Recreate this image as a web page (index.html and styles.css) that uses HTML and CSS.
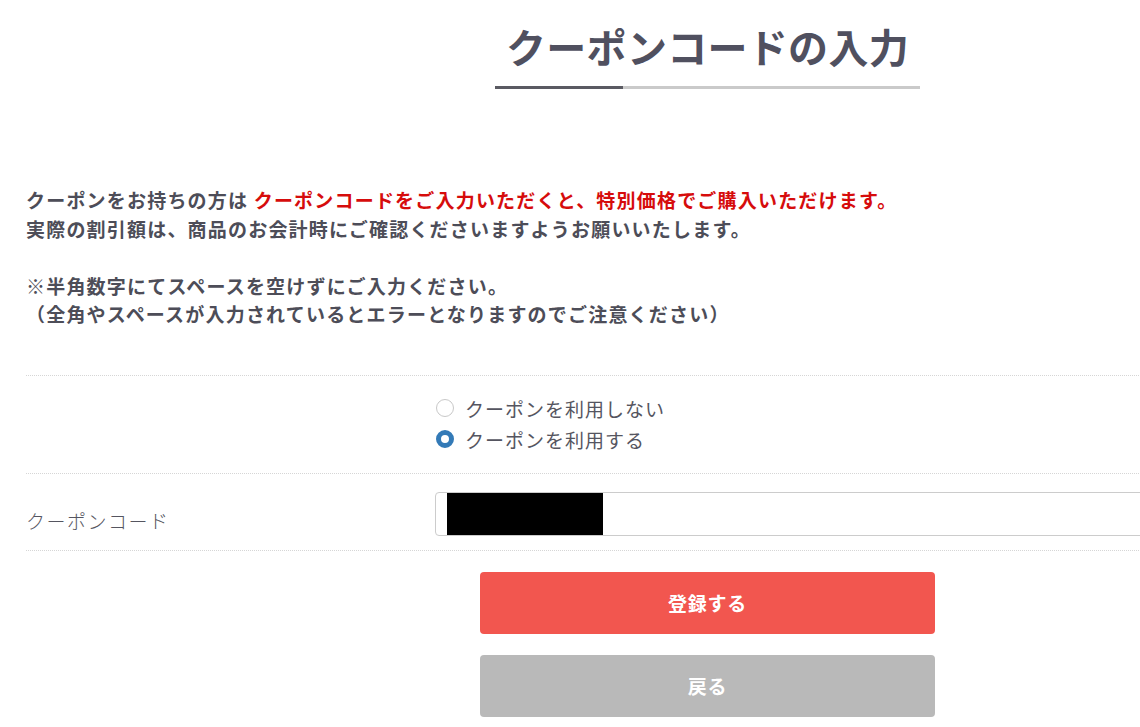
FILE: index.html
```html
<!DOCTYPE html>
<html lang="ja">
<head>
<meta charset="utf-8">
<title>クーポンコードの入力</title>
<link rel="stylesheet" href="styles.css">
</head>
<body>
<div class="page">
  <header class="title-wrap">
    <h1 class="title">クーポンコードの入力</h1>
    <div class="title-bar"></div>
  </header>

  <p class="lead">
    クーポンをお持ちの方は <span class="red">クーポンコードをご入力いただくと、特別価格でご購入いただけます。</span><br>
    実際の割引額は、商品のお会計時にご確認くださいますようお願いいたします。<br>
    <br>
    ※半角数字にてスペースを空けずにご入力ください。<br>
    （全角やスペースが入力されているとエラーとなりますのでご注意ください）
  </p>

  <div class="form">
    <div class="row row-radio">
      <div class="label"></div>
      <div class="field radios">
        <label class="radio"><input type="radio" name="use" class="radio-input"><span>クーポンを利用しない</span></label>
        <label class="radio"><input type="radio" name="use" class="radio-input" checked><span>クーポンを利用する</span></label>
      </div>
    </div>
    <div class="row row-code">
      <div class="label code-label">クーポンコード</div>
      <div class="field">
        <div class="input-box"><span class="mask"></span></div>
      </div>
    </div>
  </div>

  <div class="buttons">
    <button class="btn btn-primary" type="button">登録する</button>
    <button class="btn btn-back" type="button">戻る</button>
  </div>
</div>
</body>
</html>
```
FILE: styles.css
```css
html, body {
  margin: 0;
  padding: 0;
  overflow: hidden;
  background: #ffffff;
}
body {
  font-family: "Noto Sans CJK JP", "Noto Sans", sans-serif;
  color: #4d4d58;
}
.page {
  width: 1363px;
  margin-left: 26px;
}
.title-wrap {
  display: flex;
  flex-direction: column;
  align-items: center;
  padding-top: 22px;
}
.title {
  margin: 0;
  font-size: 40px;
  line-height: 48px;
  font-weight: 700;
  color: #50505f;
  letter-spacing: 0.3px;
}
.title-bar {
  margin-top: 16px;
  width: 425px;
  height: 3px;
  background: linear-gradient(to right, #5a5a62 0, #5a5a62 30%, #cacaca 30%, #cacaca 100%);
}
.lead {
  margin: 97px 0 0;
  font-size: 19px;
  line-height: 28.5px;
  font-weight: 700;
  letter-spacing: 1.2px;
  color: #4d4d58;
}
.red {
  color: #d60c0c;
}
.form {
  margin-top: 46px;
  border-top: 1px dotted #d6d6d6;
}
.row {
  display: grid;
  grid-template-columns: 409px 1fr;
  border-bottom: 1px dotted #d6d6d6;
}
.row-radio {
  padding: 17px 0 18px;
}
.row-code {
  padding: 18px 0 14px;
  align-items: center;
}
.label {
  font-size: 19px;
  color: #555560;
  letter-spacing: 1.5px;
}
.code-label {
  padding-top: 14px;
  font-weight: 300;
}
.radios {
  display: flex;
  flex-direction: column;
}
.radio {
  display: flex;
  align-items: center;
  height: 31px;
  font-size: 19px;
  color: #555560;
  letter-spacing: 1px;
}
.radio-input {
  -webkit-appearance: none;
  appearance: none;
  box-sizing: border-box;
  width: 18px;
  height: 18px;
  margin: 0 11px 0 1px;
  border: 1px solid #c8c8c8;
  border-radius: 50%;
  background: #fff;
}
.radio-input:checked {
  border: 5px solid #337ab7;
}
.input-box {
  box-sizing: border-box;
  height: 44px;
  border: 1px solid #cccccc;
  border-radius: 4px;
  padding: 0 0 0 11px;
  display: flex;
  align-items: stretch;
}
.mask {
  width: 156px;
  background: #000;
}
.buttons {
  display: flex;
  flex-direction: column;
  align-items: center;
  gap: 21px;
  margin-top: 21px;
}
.btn {
  width: 455px;
  height: 62px;
  border: 0;
  border-radius: 4px;
  font-family: "Noto Sans CJK JP", "Noto Sans", sans-serif;
  font-size: 19px;
  font-weight: 700;
  letter-spacing: 0.7px;
  color: #ffffff;
  padding: 0;
}
.btn-primary {
  background: #f2564f;
}
.btn-back {
  background: #b9b9b9;
}
```
